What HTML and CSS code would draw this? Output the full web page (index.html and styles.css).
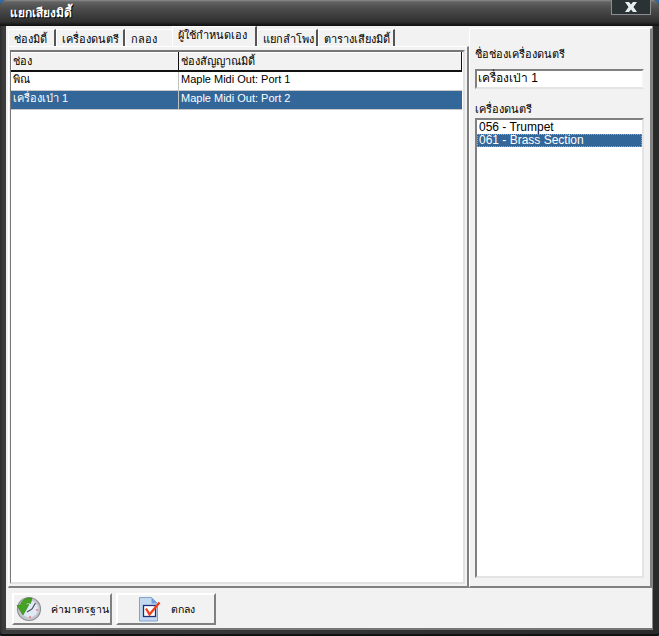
FILE: index.html
```html
<!DOCTYPE html>
<html lang="th">
<head>
<meta charset="utf-8">
<title>แยกเสียงมิดี้</title>
<link rel="stylesheet" href="styles.css">
</head>
<body>
<div class="window">
  <div class="titlebar">
    <span class="title">แยกเสียงมิดี้</span>
    <span class="close"><svg width="16" height="10" viewBox="0 0 16 10"><path d="M2 0h4l2 2.500 2-2.500h4l-3.500 5 3.500 5h-4l-2-2.500-2 2.500h-4l3.500-5z" fill="#e8ecec"/></svg></span>
  </div>
  <div class="client">
    <div class="main">
      <div class="left">
        <div class="tabs">
          <span class="tab t1">ช่องมิดี้</span>
          <span class="tab t2">เครื่องดนตรี</span>
          <span class="tab t3">กลอง</span>
          <span class="tab active t4">ผู้ใช้กำหนดเอง</span>
          <span class="tab t5">แยกลำโพง</span>
          <span class="tab t6">ตารางเสียงมิดี้</span>
        </div>
        <div class="panel">
          <div class="grid">
            <div class="row head"><div class="c1">ช่อง</div><div class="c2">ช่องสัญญาณมิดี้</div></div>
            <div class="row"><div class="c1">พิณ</div><div class="c2">Maple Midi Out: Port 1</div></div>
            <div class="row sel"><div class="c1">เครื่องเป่า 1</div><div class="c2">Maple Midi Out: Port 2</div></div>
          </div>
        </div>
      </div>
      <div class="side">
        <div class="lbl first">ชื่อช่องเครื่องดนตรี</div>
        <div class="input">เครื่องเป่า 1</div>
        <div class="lbl second">เครื่องดนตรี</div>
        <div class="list">
          <div class="item">056 - Trumpet</div>
          <div class="item on">061 - Brass Section</div>
        </div>
      </div>
    </div>
    <div class="footer">
      <div class="btn b1">
        <svg class="ico" width="26" height="26" viewBox="0 0 26 26">
          <circle cx="13" cy="13" r="11.500" fill="#c4c7cd" stroke="#8e9096" stroke-width="1.200"/>
          <circle cx="13.500" cy="13" r="8.500" fill="#dfeaf6"/>
          <path d="M16 13l3.500-6M16 13l-5 3" stroke="#4d525e" stroke-width="1.200" fill="none"/>
          <circle cx="14" cy="21" r="1" fill="#e77"/><circle cx="21" cy="14" r="1" fill="#e77"/>
          <path d="M16 2.500c-5-1.500-10 1-11.500 6.500l-3.500 .5 6 9.500 6-10.500-3.500 .5c1-2 3-2.500 5-1.500z" fill="#45a322" stroke="#2e7d12" stroke-width=".6"/>
        </svg>
        <span class="btxt">ค่ามาตรฐาน</span>
      </div>
      <div class="btn b2">
        <svg class="ico2" width="24" height="25" viewBox="0 0 24 25">
          <path d="M.5.500h12l6 6v17.500h-18z" fill="#c4d8f0" stroke="#7ea3d0"/>
          <path d="M12.500.500v6h6z" fill="#6fa2dc"/>
          <rect x="4.500" y="8.500" width="12" height="11" fill="#fff" stroke="#1c2f78" stroke-width="1.300"/>
          <path d="M7 11.500l3.500 6L20.500 5.500" stroke="#f0401a" stroke-width="2.300" fill="none"/>
        </svg>
        <span class="btxt">ตกลง</span>
      </div>
    </div>
  </div>
</div>
</body>
</html>
```
FILE: styles.css
```css
* { box-sizing: border-box; }
html, body { margin: 0; padding: 0; background: #2a6ab0; }
body { width: 659px; height: 636px; overflow: hidden; font-family: "Liberation Sans", "Noto Sans", sans-serif; font-size: 11px; color: #000; }
.window { width: 659px; height: 636px; display: flex; flex-direction: column; background: linear-gradient(90deg, #2c2c2c, #3c3c3c 3px, #2a2a2a); border-radius: 6px 6px 2px 2px; box-shadow: inset 0 -2px 0 #111; overflow: hidden; }
.titlebar { height: 26px; flex: none; display: flex; justify-content: space-between; background: linear-gradient(#8c8c8c 0, #626262 2px, #4e4e4e 8px, #2f2f2f 22px, #141414 25px); padding: 0 8px 0 10px; }
.title { color: #fff; font-weight: 700; font-size: 12px; line-height: 26px; text-shadow: 1px 1px 0 #000; }
.close { width: 40px; height: 15px; border: 1px solid #8a8e8e; border-top: 0; background: #2b3233; display: flex; align-items: center; justify-content: center; }
.client { flex: 1; margin: 0 6px 6px 6px; background: #f2f2f2; display: flex; flex-direction: column; border-right: 1px solid #888; border-bottom: 2px solid #777; }
.main { height: 562px; display: flex; flex: none; }
.left { width: 463px; flex: none; padding: 2px 0 0 2px; display: flex; flex-direction: column; }
.tabs { display: flex; height: 18px; padding-top: 1px; flex: none; align-items: flex-end; }
.tab { height: 17px; line-height: 18px; padding-left: 5px; background: #f2f2f2; border-top: 1px solid #fff; border-left: 1px solid #fff; border-right: 2px solid #555; white-space: nowrap; }
.t1 { width: 48px; } .t2 { width: 69px; } .t3 { width: 47px; border-right: 0; } .t4 { width: 85px; height: 20px; line-height: 17px; } .t5 { width: 61px; } .t6 { width: 77px; }
.panel { flex: 1; border: 1px solid #fff; border-right: 2px solid #808080; border-bottom: 2px solid #808080; padding: 3px 2px 2px 1px; }
.grid { height: 100%; background: #fff; border-top: 2px solid #777; border-left: 1px solid #777; border-right: 2px solid #e2e2e2; border-bottom: 2px solid #e2e2e2; padding-right: 1px; }
.row { display: flex; height: 19px; line-height: 15px; border-bottom: 1px solid #c8c8c8; }
.row .c1 { width: 168px; padding-left: 2px; border-right: 1px solid #c0c0c0; flex: none; }
.row .c2 { flex: 1; padding-left: 2px; }
.head { height: 20px; line-height: 18px; background: #f2f2f2; border-bottom: 2px solid #111; border-right: 1px solid #111; box-shadow: inset 1px 1px 0 #fff; }
.head .c1 { border-right: 1px solid #111; }
.sel { background: #336699; color: #fff; }
.side { flex: 1; border: 1px solid #fff; border-right: 2px solid #808080; border-bottom: 2px solid #808080; padding: 0 6px 0 5px; margin-top: 2px; display: flex; flex-direction: column; }
.lbl { line-height: 15px; }
.lbl.first { margin-top: 18px; }
.lbl.second { margin-top: 13px; }
.input { height: 20px; margin-top: 7px; background: #fff; border: 2px solid; border-color: #808080 #f4f4f4 #e4e4e4 #808080; padding-left: 1px; line-height: 15px; font-size: 12px; }
.list { height: 460px; margin-top: 1px; background: #fff; border: 2px solid; border-color: #808080 #e4e4e4 #e4e4e4 #808080; padding-top: 1px; }
.item { height: 13px; line-height: 13px; padding-left: 2px; font-size: 12px; }
.item.on { background: #336699; color: #fff; outline: 1px dotted #d9a040; outline-offset: -1px; }
.footer { flex: 1; display: flex; gap: 4px; padding: 5px 0 0 6px; }
.btn { width: 100px; height: 32px; background: #f2f2f2; border: 2px solid; border-color: #fff #808080 #808080 #fff; display: flex; align-items: center; white-space: nowrap; }
.b1 .ico { margin-left: 2px; flex: none; }
.b1 .btxt { margin-left: 9px; font-size: 10.500px; }
.b2 .ico2 { margin-left: 21px; flex: none; }
.b2 .btxt { margin-left: 8px; font-size: 10.500px; }
```
